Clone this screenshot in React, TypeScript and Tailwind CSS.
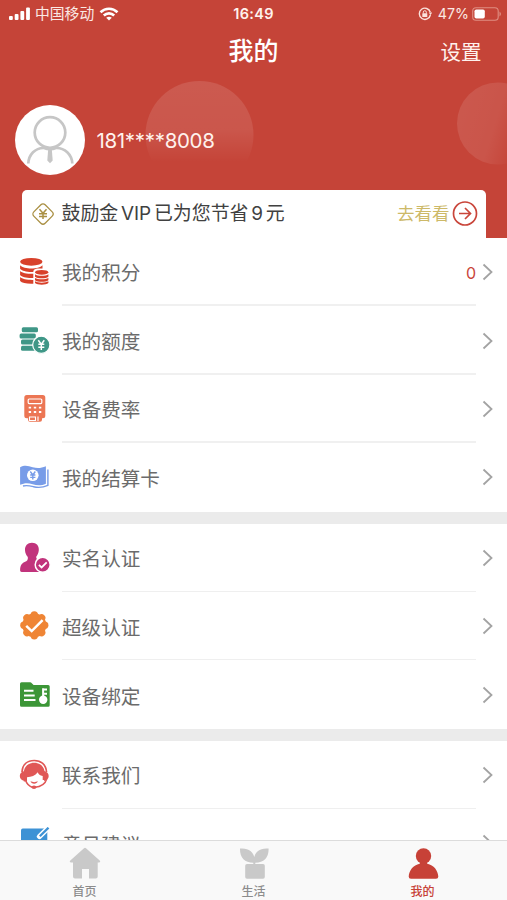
import type { ReactNode } from 'react';

function Icon({ children }: { children: ReactNode }) {
  return (
    <svg viewBox="0 0 32 32" className="h-8 w-8 shrink-0" fill="none">
      {children}
    </svg>
  );
}

const coins = (
  <Icon>
    <g fill="#d8412b">
      <ellipse cx="12.3" cy="5.8" rx="11.2" ry="3.9" />
      <path d="M1.1 9.2c2 2.2 6.5 3.2 11.2 3.2s9.2-1 11.2-3.2v3.3H18c-2 .5-3.700 1.400-3.700 3.200v.3C8 16.300 3 15 1.100 12.800z" />
      <path d="M1.100 14.900c2 2 7 3 13.200 2.900v4.200C8 22.300 3 21.200 1.100 19.100z" />
      <path d="M1.100 21.100c2 2 7 3 13.200 2.900v3.700C8 28 3 27 1.100 25z" />
      <ellipse cx="22.700" cy="16.300" rx="6.600" ry="2.400" />
      <path d="M16 18.200c2.500 2 10.900 2 13.400 0v2.600c-2.500 2-10.900 2-13.400 0zM16 21.900c2.500 1.900 10.900 1.900 13.400 0v2.300c-2.500 2-10.900 2-13.400 0zM16 25.200c2.500 1.900 10.900 1.900 13.400 0v1.800c-2.500 2.300-10.900 2.300-13.400 0z" />
    </g>
  </Icon>
);

const quota = (
  <Icon>
    <g fill="#3f9787">
      <rect x="2.800" y="2.300" width="16.200" height="5" rx="1.500" />
      <rect x="0.600" y="8.400" width="16.200" height="5" rx="1.500" />
      <rect x="2" y="14.600" width="14" height="4.900" rx="1.500" />
      <rect x="2" y="20.800" width="16" height="5" rx="1.500" />
    </g>
    <circle cx="22.300" cy="19.800" r="8.600" fill="#3f9787" stroke="#fff" strokeWidth="1.200" />
    <path d="M19.300 15.200l3 4 3-4M22.300 19v6M19.300 19.300h6M19.300 22.200h6" stroke="#fff" strokeWidth="1.500" />
  </Icon>
);

const terminal = (
  <Icon>
    <path d="M7.800 2h16a2.500 2.500 0 0 1 2.500 2.500v18.300a2.500 2.500 0 0 1-2.500 2.500H23v1.500a2 2 0 0 1-2 2H11a2 2 0 0 1-2-2v-1.500H7.800a2.500 2.500 0 0 1-2.500-2.500V4.500A2.500 2.500 0 0 1 7.800 2z" fill="#ec7654" />
    <rect x="9.200" y="6" width="13.600" height="4.600" rx="1" stroke="#fff" strokeWidth="1.200" />
    <path d="M9.700 14.600h2.400m2.700 0h2.400m2.700 0h2.400M9.700 19h2.400m2.700 0h2.400m2.700 0h2.400" stroke="#fff" strokeWidth="1.800" />
    <path d="M10.500 24h6v3.500h-6zM19 23.600V28" stroke="#fff" strokeWidth="1.100" />
  </Icon>
);

const banknote = (
  <Icon>
    <path d="M1.100 6.200C6 3.500 9.500 5 13.700 6.200c4.500 1.200 8.500 1 13.200-1v17.600c-4.700 2-8.700 2-13.200.4-4.500-1.500-8.300-1.500-12.600.6z" fill="#789ce8" />
    <path d="M4 25c4-1 7-.2 10.500.7 5 1.300 9.500.8 14.400-1.300V8.500" stroke="#789ce8" strokeWidth="1.400" />
    <circle cx="13.800" cy="14.300" r="5.800" fill="#fff" />
    <path d="M11.300 10.500l2.500 3.500 2.500-3.500M13.800 14v4.500M11.200 14h5.200M11.200 16.400h5.200" stroke="#789ce8" strokeWidth="1.400" />
  </Icon>
);

const identity = (
  <Icon>
    <path d="M13 .7c4.500 0 7.200 3 6.800 7.500-.2 3-1.500 5-2.500 6.400-.3 2 .4 2.500 2 3.400l6 3-2 9H2.700C1.700 30 1 29.300 1.100 28c.2-4.500 1.500-6.500 4.500-7.900 2.600-1.200 3.600-2.400 3.200-5.200C7 13 6.200 10.800 6 8.200 5.800 3.700 8.500.7 13 .7z" fill="#c1337c" />
    <circle cx="23.700" cy="22.700" r="7.500" fill="#c1337c" stroke="#fff" strokeWidth="1.500" />
    <path d="M19.900 22.800l2.700 2.600 5.100-5" stroke="#fff" strokeWidth="1.800" />
  </Icon>
);

const verified = (
  <Icon>
    <g fill="#ef8535">
      <circle cx="15.300" cy="15.300" r="12" />
      {[0, 45, 90, 135, 180, 225, 270, 315].map((angle) => (
        <circle key={angle} cx="15.300" cy="4.900" r="3.700" transform={`rotate(${angle} 15.300 15.300)`} />
      ))}
    </g>
    <path d="M7.200 15.800l5.500 5.300L23.600 10.200" stroke="#fff" strokeWidth="2.500" />
  </Icon>
);

const binding = (
  <Icon>
    <path d="M2.500 3.300H11q1.200 0 1.800 1L14.600 6h14.600q1.500 0 1.500 1.500v18.700q0 1.500-1.500 1.500H2.500Q1 27.700 1 26.200V4.800q0-1.500 1.500-1.500z" fill="#3c9637" />
    <path d="M5 11.800h9.500M5 16.400h10.700M5 21h11.500M24.100 20V9.300M24 10.500h4M24 14.800h4" stroke="#fff" strokeWidth="2" />
    <circle cx="24.200" cy="20.800" r="4.200" fill="#fff" />
  </Icon>
);

const support = (
  <Icon>
    <path d="M3 13C3.500 5.500 8.500 1.500 15.200 1.500S27 5.500 27.500 13" stroke="#e05756" strokeWidth="1.700" />
    <path d="M4.800 13.500C5.200 7.200 9.500 3.700 15.200 3.700S25.200 7.200 25.700 13.500v7.500h-2v-4c-2.700-.3-4.200-1.500-4.900-3.700-2.800 3.400-6.200 4.700-10.800 5v4.200H4.800z" fill="#e05756" />
    <path d="M5.500 12v10C2.500 21.500.8 19.300.8 17s1.700-4.500 4.700-5zM25 12v10c3-.5 4.700-2.700 4.700-5s-1.700-4.500-4.700-5z" fill="#e05756" />
    <path d="M6.200 20c1.200 4.300 4 7.500 7.800 8.500M27.700 20c-1.400 4.800-5.500 7.700-12 8.300" stroke="#e05756" strokeWidth="1.500" />
    <path d="M11.500 22.300c2.300 1.100 5 1.100 7.300 0-.7 3.200-6.600 3.200-7.300 0z" fill="#e05756" />
    <ellipse cx="15" cy="28.300" rx="2.400" ry="1.800" fill="#e05756" />
  </Icon>
);

const feedback = (
  <Icon>
    <path d="M3.800 1.600h24.500v25H2V3.500q0-1.900 1.800-1.900z" fill="#3d92d5" />
    <path d="M30.500-.5L20.500 9.500" stroke="#fff" strokeWidth="5.200" strokeLinecap="round" />
    <path d="M29.500.7l-8.700 8.600" stroke="#3d92d5" strokeWidth="2.300" />
  </Icon>
);

type Item = { label: string; icon: ReactNode; value?: string };

const groups: { divider: string; items: Item[] }[] = [
  {
    divider: 'border-b-2 border-[#f0f0f0]',
    items: [
      { label: '我的积分', icon: coins, value: '0' },
      { label: '我的额度', icon: quota },
      { label: '设备费率', icon: terminal },
      { label: '我的结算卡', icon: banknote },
    ],
  },
  {
    divider: 'border-b border-[#efefef]',
    items: [
      { label: '实名认证', icon: identity },
      { label: '超级认证', icon: verified },
      { label: '设备绑定', icon: binding },
    ],
  },
  {
    divider: 'border-b border-[#efefef]',
    items: [
      { label: '联系我们', icon: support },
      { label: '意见建议', icon: feedback },
    ],
  },
];

function Row({ item, divider }: { item: Item; divider: string }) {
  return (
    <div className="flex h-[68.4px] shrink-0 pl-[19px]">
      <div className="flex items-center">{item.icon}</div>
      <div className={`ml-[11px] flex w-[414px] shrink-0 items-center justify-between pt-[2px] ${divider}`}>
        <span className="text-[19.6px] leading-7 text-[#6b6b6b]">{item.label}</span>
        {item.value && <span className="pt-px font-['Inter','Noto_Sans_CJK_SC',sans-serif] text-[16px] text-[#c9453a]">{item.value}</span>}
      </div>
      <div className="ml-1.5 flex items-center">
        <svg viewBox="0 0 12 18" className="h-[18px] w-3" fill="none">
          <path d="M1.500 1.500L9.500 9l-8 7.500" stroke="#a3a3a3" strokeWidth="1.800" />
        </svg>
      </div>
    </div>
  );
}

function StatusBar() {
  return (
    <div className="grid h-7 grid-cols-3 items-center text-[14px]">
      <div className="flex items-center pl-[9px]">
        <svg viewBox="0 0 22 14" className="h-[14px] w-[22px]" fill="#fff">
          <rect x="0" y="9" width="3.800" height="4" rx="1" />
          <rect x="5.700" y="7" width="3.800" height="6" rx="1" />
          <rect x="11.400" y="4" width="3.800" height="9" rx="1" />
          <rect x="17.100" y="0.500" width="3.800" height="12.500" rx="1" />
        </svg>
        <span className="ml-1 text-[14.8px] leading-5 text-[#fbe9e4]">中国移动</span>
        <svg viewBox="0 0 20 14" className="ml-[5px] h-[14px] w-5" fill="none" stroke="#fff" strokeWidth="2.600">
          <path d="M1.500 5.300c4.900-4.700 12.100-4.700 17 0M4.800 8.500c3-2.900 7.400-2.900 10.400 0" />
          <path d="M10 13.500L7.200 10.700q2.800-2 5.600 0z" fill="#fff" stroke="none" />
        </svg>
      </div>
      <span className="text-center text-[14.500px] font-semibold tracking-[0.3px] text-[#fff2ed]">16:49</span>
      <div className="flex items-center justify-end pr-[5px]">
        <svg viewBox="0 0 14 14" className="mr-[6px] h-[14px] w-[14px]" fill="none" stroke="#fbe1db">
          <path d="M12.300 5.200A5.600 5.600 0 1 0 12.400 8" strokeWidth="1.400" />
          <path d="M10.800 5.500h3.400l-1.700 2.700z" fill="#fbe1db" stroke="none" />
          <rect x="4.300" y="6.300" width="5" height="3.700" rx=".5" fill="#fbe1db" stroke="none" />
          <path d="M5.300 6.500V5.200a1.500 1.500 0 0 1 3 0v1.300" strokeWidth="1" />
        </svg>
        <span className="mr-[3px] text-[14.200px] text-[#fbe9e4]">47%</span>
        <svg viewBox="0 0 30 14" className="h-[14px] w-[30px]" fill="none">
          <rect x="0.700" y="0.700" width="25.500" height="12.600" rx="3.300" stroke="#df8d81" strokeWidth="1.100" />
          <rect x="2.500" y="2.500" width="10.300" height="9" rx="1.800" fill="#fff" />
          <path d="M27.500 4.500q3 2.500 0 5z" fill="#df8d81" />
        </svg>
      </div>
    </div>
  );
}

function Header() {
  return (
    <header className="relative flex h-[238px] shrink-0 flex-col bg-[#c54438] font-['Inter','Noto_Sans_CJK_SC',sans-serif] text-white">
      <svg viewBox="0 0 507 238" className="absolute inset-0 h-full w-full" fill="none">
        <defs>
          <linearGradient id="orbCenter" x1="0" y1="0" x2="0" y2="1">
            <stop offset="0" stopColor="#fff" stopOpacity=".12" />
            <stop offset=".45" stopColor="#fff" stopOpacity=".1" />
            <stop offset=".75" stopColor="#fff" stopOpacity="0" />
          </linearGradient>
          <linearGradient id="orbEdge" x1="0" y1=".3" x2=".8" y2=".55">
            <stop offset="0" stopColor="#fff" stopOpacity=".11" />
            <stop offset=".6" stopColor="#fff" stopOpacity=".09" />
            <stop offset="1" stopColor="#fff" stopOpacity="0" />
          </linearGradient>
        </defs>
        <circle cx="199.500" cy="135" r="54" fill="url(#orbCenter)" />
        <circle cx="498" cy="123.500" r="41" fill="url(#orbEdge)" />
      </svg>
      <div className="relative flex h-full flex-col">
        <StatusBar />
        <div className="grid h-[46px] grid-cols-3 items-center pr-[25.500px] pl-[25.500px]">
          <span />
          <h1 className="pt-px text-center text-[25px] leading-none font-medium">我的</h1>
          <span className="pt-[5px] text-right text-[20.500px] leading-none text-[#fff2ed]">设置</span>
        </div>
        <div className="mt-[31px] flex items-center pl-[15px]">
          <div className="h-[70px] w-[70px] rounded-full bg-white">
            <svg viewBox="0 0 70 70" className="h-full w-full" fill="none" stroke="#c6c6c6" strokeWidth="2.700">
              <circle cx="35" cy="27.500" r="15.300" />
              <path d="M13.300 58.500c.4-9 7-15.800 15.700-15.500 3.500 1.400 8.500 1.400 12 0 8.700-.3 15.900 6.500 16.300 15.500" />
              <path d="M33.200 44h3.600l.9 11.500-2.700 2.800-2.700-2.800z" fill="#c6c6c6" stroke="none" />
            </svg>
          </div>
          <span className="ml-[11.500px] pt-px text-[20.500px] leading-6 tracking-[-0.33px] text-[#fff2ed]">181****8008</span>
        </div>
        <div className="mx-[21.500px] mt-[14.500px] flex flex-1 items-center rounded-t-[5px] bg-white pr-2 pl-[9px] text-[#333]">
          <svg viewBox="0 0 24 24" className="h-6 w-6" fill="none" stroke="#aa9044">
            <rect x="4" y="4" width="16" height="16" rx="3" transform="rotate(45 12 12)" strokeWidth="1.300" />
            <path d="M8.500 7.300l3.500 4 3.500-4M12 11v6M8 11.700h8M8 14.400h8" strokeWidth="1.500" />
          </svg>
          <span className="ml-[7px] text-[18.900px] leading-7 whitespace-nowrap text-[#414141] [word-spacing:-2.500px]">鼓励金 VIP 已为您节省 9 元</span>
          <span className="ml-auto text-[17.500px] leading-7 text-[#cdb968]">去看看</span>
          <svg viewBox="0 0 26 26" className="ml-[2px] h-[26px] w-[26px]" fill="none" stroke="#c9453a" strokeWidth="1.700">
            <circle cx="13" cy="12.500" r="11.500" />
            <path d="M7 12.500h11M13 7l5.500 5.500-5.500 5.500" />
          </svg>
        </div>
      </div>
    </header>
  );
}

function Tab({ label, active, children }: { label: string; active?: boolean; children: ReactNode }) {
  return (
    <div className={`flex flex-col items-center pt-[6px] ${active ? 'text-[#c74137]' : 'text-[#c9c9c9]'}`}>
      <svg viewBox="0 0 32 32" className="h-8 w-8" fill="currentColor">{children}</svg>
      <span className={`mt-1 text-[12px] leading-4 font-medium ${active ? 'text-[#c74137]' : 'text-[#8c8c8c]'}`}>{label}</span>
    </div>
  );
}

export default function App() {
  return (
    <div className="flex h-[900px] w-[507px] flex-col overflow-hidden bg-white font-['Noto_Sans_CJK_SC',sans-serif]">
      <Header />
      <main className="flex min-h-0 flex-1 flex-col gap-3 overflow-hidden bg-[#ebebeb]">
        {groups.map(({ items, divider }) => (
          <section key={items[0].label} className="shrink-0 bg-white">
            {items.map((item, i) => (
              <Row key={item.label} item={item} divider={i === items.length - 1 ? '' : divider} />
            ))}
          </section>
        ))}
      </main>
      <nav className="grid h-[60.500px] shrink-0 grid-cols-3 border-t border-[#dcdcdc] bg-[#f9f9f9]">
        <Tab label="首页">
          <path d="M15 1.200q1-.8 2 0l13.700 12.400q1.300 1.600-.7 1.900h-1.300v14q0 2-2 2H20V22h-7v9.500H6q-2 0-2-2v-14H2q-2-.3-.7-1.900z" />
        </Tab>
        <Tab label="生活">
          <path d="M2 1.500c8.500-.8 13 3 14.300 8.500C17.500 4.500 22 .7 30.600 1.500c.3 9.200-4.500 14-13.300 14.300V17H25q1.800 0 1.800 1.800V30q0 1.800-1.800 1.800H9Q7.200 31.800 7.200 30V18.800Q7.200 17 9 17h6.300v-1.200C6.500 15.500 1.700 10.700 2 1.500z" />
        </Tab>
        <Tab label="我的" active>
          <circle cx="16.500" cy="9" r="7.700" />
          <path d="M13.200 15h6.600l.5 1.700c6.500 1.200 10.700 6.800 11 12.700q0 2.300-2.300 2.300H4q-2.300 0-2.300-2.300c.3-5.900 4.500-11.500 11-12.700z" />
        </Tab>
      </nav>
    </div>
  );
}
